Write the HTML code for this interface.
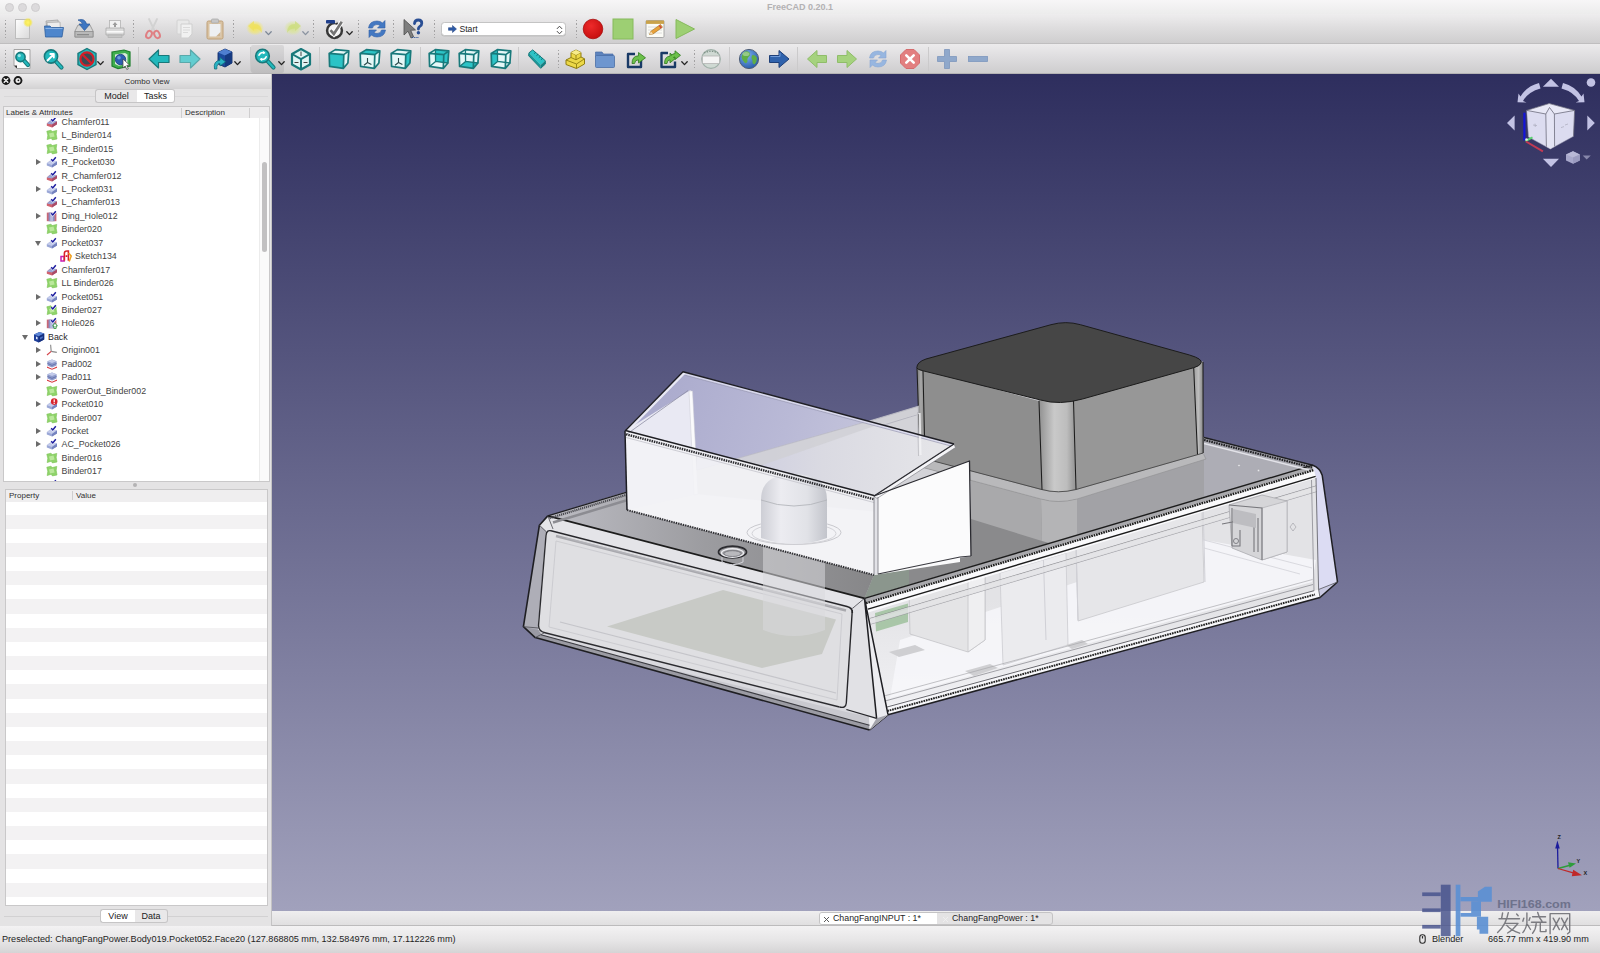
<!DOCTYPE html>
<html>
<head>
<meta charset="utf-8">
<title>FreeCAD 0.20.1</title>
<style>
*{box-sizing:border-box;margin:0;padding:0}
html,body{width:1600px;height:953px;overflow:hidden;background:#ececec;font-family:"Liberation Sans",sans-serif;color:#262626}
.abs{position:absolute}
#titlebar{left:0;top:0;width:1600px;height:14px;background:linear-gradient(#f7f6f7,#ececec);}
#title{left:0;top:1px;width:1600px;text-align:center;font-size:9px;line-height:13px;color:#b3b1b3;font-weight:bold}
.tl{width:9px;height:9px;border-radius:50%;background:#dcdadc;border:1px solid #cfcdcf;top:3px}
#tb1{left:0;top:14px;width:1600px;height:30px;background:linear-gradient(#eeedee,#dfdedf 45%,#cfcecf);border-bottom:1px solid #bfbebf}
#tb2{left:0;top:44px;width:1600px;height:30px;background:linear-gradient(#ecebec,#dedddf 45%,#cecdce);border-bottom:1px solid #b4b3b4}
.sep{width:1px;height:24px;background:#cbcacb;top:3px}
.grip{width:1.3px;height:18px;top:6px;background:repeating-linear-gradient(to bottom,#a3a2a3 0 1.3px,transparent 1.3px 3.4px)}
.dd{top:15px;width:5px;height:3px}
#dock{left:0;top:74px;width:272px;height:852px;background:#e4e3e4}
#dockhead{left:0;top:0;width:272px;height:15px;background:linear-gradient(#f0eff0,#e2e1e2 50%,#d3d2d3);font-size:8px;text-align:center;line-height:15px;color:#303030;padding-left:22px}
.seg{font-size:9px;color:#222;text-align:center;line-height:13px;height:14px;border:1px solid #c6c5c6;background:#e9e8e9}
.seg.on{background:#fff}
#treebox{left:3px;top:32px;width:267px;height:376px;background:#fff;border:1px solid #c9c8c9;overflow:hidden}
#treehead{left:0;top:0;width:265px;height:11px;background:#eeedee;font-size:7.5px;line-height:11px;color:#303030}
.row{left:0;height:14px;font-size:8.85px;line-height:14px;white-space:nowrap;color:#3a3a3a}
.tri{width:0;height:0;border-style:solid}
.tri.r{border-width:3px 0 3px 5px;border-color:transparent transparent transparent #6b6b6b}
.tri.d{border-width:5px 3px 0 3px;border-color:#6b6b6b transparent transparent transparent}
#propbox{left:5px;top:415px;width:263px;height:417px;background:#fff;border:1px solid #c9c8c9;overflow:hidden}
#view{left:272px;top:74px;width:1328px;height:837px;background:linear-gradient(#2e2e5e,#a1a1bc);overflow:hidden}
#tabbar{left:272px;top:911px;width:1328px;height:15px;background:linear-gradient(#efeeef,#e0dfe0);border-bottom:1px solid #bcbbbc}
.dtab{top:1px;height:13px;font-size:8.8px;line-height:13px;color:#242424;white-space:nowrap}
#status{left:0;top:926px;width:1600px;height:27px;background:linear-gradient(#f3f2f3,#e6e5e6 55%,#d5d4d5);font-size:9.12px;color:#1e1e1e}
</style>
</head>
<body>
<div id="titlebar" class="abs">
  <div class="abs tl" style="left:5px"></div><div class="abs tl" style="left:18px"></div><div class="abs tl" style="left:31px"></div>
  <div id="title" class="abs">FreeCAD 0.20.1</div>
</div>

<div id="tb1" class="abs"><div class="abs grip" style="left:5.0px"></div>
<svg class="abs" style="left:10.6px;top:3.0px" width="24" height="24" viewBox="0 0 24 24" ><defs><linearGradient id="nw" x1="0" y1="0" x2="1" y2="1"><stop offset="0" stop-color="#fff"/><stop offset="1" stop-color="#d9d9d9"/></linearGradient><radialGradient id="nst"><stop offset="0" stop-color="#fff36a"/><stop offset=".55" stop-color="#f6e84a" stop-opacity=".9"/><stop offset="1" stop-color="#f6e84a" stop-opacity="0"/></radialGradient></defs><rect x="4.5" y="2.5" width="14" height="19" fill="url(#nw)" stroke="#bdbdbd"/><circle cx="17" cy="5.5" r="5" fill="url(#nst)"/></svg>
<svg class="abs" style="left:42.0px;top:3.0px" width="24" height="24" viewBox="0 0 24 24" ><path d="M4 4 L16 3 L17 14 L5 15 Z" fill="#d4d4d4" stroke="#9a9a9a" stroke-width=".7"/><path d="M5 5.5 L18 5 L18.5 15 L6 16 Z" fill="#ececec" stroke="#a5a5a5" stroke-width=".7"/><path d="M2.5 9 L8 9 L9.5 10.5 L21.5 10.5 L20 20 L3.5 20 Z" fill="#4e86cc" stroke="#2f5f9e" stroke-width=".8"/><path d="M3.5 11.5 L20.5 11.5" stroke="#8bb4e6" stroke-width="1"/></svg>
<svg class="abs" style="left:71.7px;top:3.0px" width="24" height="24" viewBox="0 0 24 24" ><path d="M3 14 L6 8 L18 8 L21 14 L21 20 L3 20 Z" fill="#d5d5d5" stroke="#8e8e8e" stroke-width=".8"/><rect x="3" y="14.5" width="18" height="5.5" fill="#b9b9b9" stroke="#8e8e8e" stroke-width=".8"/><rect x="5" y="17" width="12" height="1.3" fill="#8b8b8b"/><path d="M6 3 Q13 1 14.5 7 L18 7 L12.5 13.5 L7 7 L10.5 7 Q10 4.5 6 3 Z" fill="#3d76c2" stroke="#285798" stroke-width=".7"/></svg>
<svg class="abs" style="left:102.7px;top:3.0px" width="24" height="24" viewBox="0 0 24 24" ><rect x="6.5" y="3.5" width="11" height="8" fill="#f2f2f2" stroke="#b4b4b4" stroke-width=".8"/><path d="M12 5 L14.5 8 L13 8 L13 10 L11 10 L11 8 L9.5 8 Z" fill="#9c9c9c"/><path d="M3 11 L21 11 L21 18 L3 18 Z" fill="#dadada" stroke="#a9a9a9" stroke-width=".8"/><rect x="3.5" y="14" width="17" height="1.6" fill="#fafafa"/><rect x="5" y="18" width="14" height="2.5" fill="#c6c6c6" stroke="#aaa" stroke-width=".6"/></svg>
<div class="abs grip" style="left:132.6px"></div>
<svg class="abs" style="left:140.9px;top:3.0px" width="24" height="24" viewBox="0 0 24 24" ><path d="M8 2 L13.2 13 M16 2 L10.8 13" stroke="#d2d2d2" stroke-width="1.8" fill="none" stroke-linecap="round"/><ellipse cx="8" cy="17.5" rx="2.6" ry="3.8" transform="rotate(25 8 17.5)" fill="none" stroke="#df7f83" stroke-width="2"/><ellipse cx="16" cy="17.5" rx="2.6" ry="3.8" transform="rotate(-25 16 17.5)" fill="none" stroke="#df7f83" stroke-width="2"/></svg>
<svg class="abs" style="left:172.6px;top:3.0px" width="24" height="24" viewBox="0 0 24 24" ><rect x="4" y="3" width="12" height="14" rx="1" fill="#e9e9e9" stroke="#d2d2d2"/><path d="M8 7 L19 7 L19 17 L15.5 21 L8 21 Z" fill="#f1f1f1" stroke="#cfcfcf"/><path d="M10 10.5h7M10 13h7M10 15.5h5" stroke="#dadada" stroke-width="1"/></svg>
<svg class="abs" style="left:202.6px;top:3.0px" width="24" height="24" viewBox="0 0 24 24" ><rect x="4" y="4" width="16" height="18" rx="1.5" fill="#d9c3a3" stroke="#bfa079"/><rect x="6.5" y="7" width="11" height="12.5" fill="#eef0f2"/><rect x="8.5" y="2" width="7" height="4" rx="1" fill="#c6c6c6" stroke="#a8a8a8" stroke-width=".7"/><path d="M13 19.5 L17.5 19.5 L17.5 15 Z" fill="#cdb38f"/></svg>
<div class="abs grip" style="left:232.9px"></div>
<svg class="abs" style="left:243.5px;top:3.0px" width="24" height="24" viewBox="0 0 24 24" ><defs><radialGradient id="un"><stop offset="0" stop-color="#f2e45c"/><stop offset=".6" stop-color="#f0e678" stop-opacity=".75"/><stop offset="1" stop-color="#f0e678" stop-opacity="0"/></radialGradient></defs><ellipse cx="11" cy="11" rx="9" ry="7.5" fill="url(#un)"/><path d="M4 9 L10 4 L10 7 Q18 7 18 16 Q15 11 10 11.5 L10 14 Z" fill="#efe05a" opacity=".75"/></svg>
<svg class="abs" style="left:264.5px;top:17px" width="7" height="5" viewBox="0 0 7 5"><path d="M0.8 0.8 L3.5 3.6 L6.2 0.8" fill="none" stroke="#7c8796" stroke-width="1.3" stroke-linecap="round" stroke-linejoin="round"/></svg>
<svg class="abs" style="left:281.0px;top:3.0px" width="24" height="24" viewBox="0 0 24 24" ><defs><radialGradient id="re"><stop offset="0" stop-color="#d3e08a"/><stop offset=".6" stop-color="#dbe59c" stop-opacity=".7"/><stop offset="1" stop-color="#dbe59c" stop-opacity="0"/></radialGradient></defs><ellipse cx="12" cy="11" rx="9" ry="7.5" fill="url(#re)"/><path d="M20 9 L14 4 L14 7 Q6 7 6 16 Q9 11 14 11.5 L14 14 Z" fill="#cbdc7c" opacity=".75"/></svg>
<svg class="abs" style="left:301.9px;top:17px" width="7" height="5" viewBox="0 0 7 5"><path d="M0.8 0.8 L3.5 3.6 L6.2 0.8" fill="none" stroke="#8a93a0" stroke-width="1.3" stroke-linecap="round" stroke-linejoin="round"/></svg>
<div class="abs grip" style="left:313.0px"></div>
<svg class="abs" style="left:323.0px;top:3.0px" width="24" height="24" viewBox="0 0 24 24" ><circle cx="11.5" cy="13.5" r="7.4" fill="#f4f4f4" stroke="#383838" stroke-width="2.5"/><path d="M7.5 13.2 L10.8 17 L18.8 4.8" fill="none" stroke="#fff" stroke-width="4.6"/><path d="M7.5 13.2 L10.8 17 L18.8 4.8" fill="none" stroke="#757575" stroke-width="2.7"/><rect x="3" y="3" width="9" height="3.6" rx=".8" fill="#1f3f8c"/><path d="M12 3.2 L15.5 4.8 L12 6.4 Z" fill="#d8d8d8"/></svg>
<svg class="abs" style="left:345.5px;top:17px" width="7" height="5" viewBox="0 0 7 5"><path d="M0.8 0.8 L3.5 3.6 L6.2 0.8" fill="none" stroke="#222" stroke-width="1.3" stroke-linecap="round" stroke-linejoin="round"/></svg>
<div class="abs grip" style="left:357.7px"></div>
<svg class="abs" style="left:365.3px;top:3.0px" width="24" height="24" viewBox="0 0 24 24" ><path d="M3.5 11 Q4.5 4 12 4 Q15.5 4 17.5 6 L20 3.5 L20 11 L12.5 11 L15 8.5 Q13.5 7.5 12 7.5 Q8 7.5 7.5 11 Z" fill="#4378c2" stroke="#305fa6" stroke-width=".6"/><path d="M20.5 13 Q19.5 20 12 20 Q8.5 20 6.5 18 L4 20.5 L4 13 L11.5 13 L9 15.5 Q10.5 16.5 12 16.5 Q16 16.5 16.5 13 Z" fill="#4378c2" stroke="#305fa6" stroke-width=".6"/></svg>
<div class="abs grip" style="left:393.0px"></div>
<svg class="abs" style="left:401.4px;top:3.0px" width="24" height="24" viewBox="0 0 24 24" ><path d="M3 2.5 L3 18 L7 14.2 L10 21 L12.6 19.8 L9.7 13.3 L14.5 13 Z" fill="#7e7e7e" stroke="#4e4e4e" stroke-width=".8"/><path d="M13.5 6.5 Q13.8 3 17.3 3 Q20.8 3 20.8 6.2 Q20.8 8.3 18.6 9.6 Q17.4 10.4 17.4 12" fill="none" stroke="#2a4f94" stroke-width="2.8" stroke-linecap="round"/><circle cx="17.4" cy="15.8" r="1.7" fill="#2a4f94"/><path d="M11 20.5 L18 20.5" stroke="#2a4f94" stroke-width="1" stroke-dasharray="1.2 1"/></svg>
<div class="abs grip" style="left:433.7px"></div>
<div class="abs" style="left:441px;top:8px;width:125px;height:14px;background:#fff;border:1px solid #c4c4c4;border-radius:3.5px;box-shadow:0 .5px 0 #bdbdbd"></div>
<svg class="abs" style="left:448px;top:11px" width="9" height="8" viewBox="0 0 9 8"><path d="M0.5 2.7 L4.5 2.7 L4.5 0.5 L8.5 4 L4.5 7.5 L4.5 5.3 L0.5 5.3 Z" fill="#2d5aa6" stroke="#1d3f7c" stroke-width=".5"/></svg>
<div class="abs" style="left:459.5px;top:9px;font-size:8.6px;line-height:12px;color:#222">Start</div>
<svg class="abs" style="left:556px;top:10.5px" width="7" height="10" viewBox="0 0 7 10"><path d="M1.2 3.6 L3.5 1.2 L5.8 3.6 M1.2 6.4 L3.5 8.8 L5.8 6.4" fill="none" stroke="#444" stroke-width="1" stroke-linecap="round" stroke-linejoin="round"/></svg>
<div class="abs grip" style="left:575.7px"></div>
<svg class="abs" style="left:580.6px;top:3.0px" width="24" height="24" viewBox="0 0 24 24" ><defs><radialGradient id="rc" cx=".4" cy=".35" r=".7"><stop offset="0" stop-color="#ee2a2a"/><stop offset="1" stop-color="#c40e0e"/></radialGradient></defs><circle cx="12" cy="12" r="9.8" fill="url(#rc)" stroke="#a80c0c" stroke-width=".8"/></svg>
<svg class="abs" style="left:611.0px;top:3.0px" width="24" height="24" viewBox="0 0 24 24" ><rect x="2" y="2" width="20" height="20" fill="#9dcf73" stroke="#86ba5c" stroke-width="1"/></svg>
<svg class="abs" style="left:643.0px;top:3.0px" width="24" height="24" viewBox="0 0 24 24" ><rect x="3" y="3.5" width="18" height="17" rx="1.2" fill="#fbfbf6" stroke="#9f9f9f" stroke-width=".9"/><rect x="3" y="3.5" width="18" height="3.4" fill="#c9a24a"/><path d="M5 10h14M5 13h14M5 16h14" stroke="#d6d6d6" stroke-width=".8"/><path d="M6.5 17.5 L8 14.2 L17.5 7.5 L19.5 10.2 L10 17 Z" fill="#e9a13a" stroke="#9a6a1c" stroke-width=".6"/><path d="M6.5 17.5 L8 14.2 L10 17 Z" fill="#f3d9b0"/><path d="M16.3 8.4 L18.3 11.1" stroke="#c44" stroke-width="1.5"/></svg>
<svg class="abs" style="left:672.7px;top:3.0px" width="24" height="24" viewBox="0 0 24 24" ><path d="M3 2.5 L21.5 12 L3 21.5 Z" fill="#9dcf73" stroke="#86ba5c" stroke-width="1" stroke-linejoin="round"/></svg></div>
<div id="tb2" class="abs"><div class="abs grip" style="left:5.0px"></div>
<svg class="abs" style="left:9.9px;top:3.0px" width="24" height="24" viewBox="0 0 24 24" ><path d="M4 2.5 L20 2.5 L20 21.5 L7 21.5 L4 18.5 Z" fill="#fafafa" stroke="#9c9c9c" stroke-width=".9"/><path d="M4 18.5 L7 18.5 L7 21.5 Z" fill="#333"/><path d="M13.7 13.2 L18.0 18.0" stroke="#18797b" stroke-width="4.2" stroke-linecap="round"/><path d="M13.7 13.2 L18.0 18.0" stroke="#22b8bc" stroke-width="2.2" stroke-linecap="round"/><circle cx="10.5" cy="10.0" r="4.6" fill="#22b8bc" stroke="#18797b" stroke-width="1.6"/><circle cx="9.3" cy="8.6" r="1.6" fill="#9be6e8"/></svg>
<svg class="abs" style="left:41.3px;top:3.0px" width="24" height="24" viewBox="0 0 24 24" ><path d="M14.6 14.1 L20.5 20.5" stroke="#18797b" stroke-width="4.2" stroke-linecap="round"/><path d="M14.6 14.1 L20.5 20.5" stroke="#22b8bc" stroke-width="2.2" stroke-linecap="round"/><circle cx="10.0" cy="9.5" r="6.6" fill="#22b8bc" stroke="#18797b" stroke-width="1.6"/><path d="M6.5 13.5 L12.5 7.5 M12.8 10.5 L12.8 7 L9.3 7" fill="none" stroke="#fff" stroke-width="1.9" stroke-linecap="round" stroke-linejoin="round"/></svg>
<svg class="abs" style="left:74.7px;top:3.0px" width="24" height="24" viewBox="0 0 24 24" ><path d="M12 1.5 L21 6.5 L21 17.5 L12 22.5 L3 17.5 L3 6.5 Z" fill="#22b8bc" stroke="#18797b" stroke-width="1.4"/><circle cx="12" cy="12" r="6.6" fill="#3b4a55" stroke="#d2202a" stroke-width="2.2"/><path d="M7.3 7.5 L16.7 16.5" stroke="#d2202a" stroke-width="2.4"/></svg>
<svg class="abs" style="left:97.1px;top:17px" width="7" height="5" viewBox="0 0 7 5"><path d="M0.8 0.8 L3.5 3.6 L6.2 0.8" fill="none" stroke="#222" stroke-width="1.3" stroke-linecap="round" stroke-linejoin="round"/></svg>
<svg class="abs" style="left:108.8px;top:3.0px" width="24" height="24" viewBox="0 0 24 24" ><path d="M3 5 L15 3 L21 5 L21 19 L9 21.5 L3 19 Z" fill="#3fae4e" stroke="#1f7f2e" stroke-width="1.2"/><path d="M6 7.5 L16 6 L18.5 7.5 L18.5 17 L9.5 18.8 L6 17 Z" fill="#d8ead9"/><circle cx="11.5" cy="12.5" r="5.2" fill="#2c5fb0" stroke="#1c3f80" stroke-width=".8"/><circle cx="10" cy="10.8" r="1.8" fill="#6f9be0"/><path d="M14 12 L14 21 L16.2 19 L17.8 22.5 L19.3 21.8 L17.8 18.4 L20.6 18.2 Z" fill="#fff" stroke="#444" stroke-width=".7"/></svg>
<div class="abs sep" style="left:138.0px"></div>
<svg class="abs" style="left:146.6px;top:3.0px" width="24" height="24" viewBox="0 0 24 24" ><path d="M2 12 L11.5 3 L11.5 8.5 L22 8.5 L22 15.5 L11.5 15.5 L11.5 21 Z" fill="#22b8bc" stroke="#18797b" stroke-width="1.2" stroke-linejoin="round"/></svg>
<svg class="abs" style="left:177.7px;top:3.0px" width="24" height="24" viewBox="0 0 24 24" ><path d="M22 12 L12.5 3 L12.5 8.5 L2 8.5 L2 15.5 L12.5 15.5 L12.5 21 Z" fill="#63cdd0" stroke="#5aa9ab" stroke-width="1.2" stroke-linejoin="round"/></svg>
<svg class="abs" style="left:210.7px;top:3.0px" width="24" height="24" viewBox="0 0 24 24" ><path d="M7 5.5 L14 2 L21 5 L21 16 L14 20 L7 17 Z" fill="#1d4a9c" stroke="#142f66" stroke-width=".9"/><path d="M7 5.5 L14 2 L21 5 L14 8.5 Z" fill="#4f7fd0"/><path d="M14 8.5 L21 5 L21 16 L14 20 Z" fill="#163a80"/><path d="M3.5 22 Q2 14 9 13.2 L9 10.5 L14.5 14.8 L9 19 L9 16.5 Q5.5 16.5 5.8 22 Z" fill="#2bb3c4" stroke="#12707c" stroke-width=".8"/></svg>
<svg class="abs" style="left:233.5px;top:17px" width="7" height="5" viewBox="0 0 7 5"><path d="M0.8 0.8 L3.5 3.6 L6.2 0.8" fill="none" stroke="#222" stroke-width="1.3" stroke-linecap="round" stroke-linejoin="round"/></svg>
<div class="abs sep" style="left:250.0px"></div>
<div class="abs" style="left:251px;top:1px;width:33px;height:28px;background:rgba(0,0,0,.075);border-radius:2px"></div>
<svg class="abs" style="left:253.0px;top:3.0px" width="24" height="24" viewBox="0 0 24 24" ><path d="M14.3 13.8 L20.5 20.5" stroke="#18797b" stroke-width="4.2" stroke-linecap="round"/><path d="M14.3 13.8 L20.5 20.5" stroke="#22b8bc" stroke-width="2.2" stroke-linecap="round"/><circle cx="9.5" cy="9.0" r="6.8" fill="#22b8bc" stroke="#18797b" stroke-width="1.6"/><path d="M6 8.2 Q7.5 5 11 5.6 M13.2 9.8 Q11.8 13 8.2 12.4" fill="none" stroke="#fff" stroke-width="1.6" stroke-linecap="round"/><path d="M10.2 3.9 L12.6 6 L9.8 7.3 Z M9 14 L6.6 12 L9.4 10.7 Z" fill="#fff"/></svg>
<svg class="abs" style="left:277.5px;top:17px" width="7" height="5" viewBox="0 0 7 5"><path d="M0.8 0.8 L3.5 3.6 L6.2 0.8" fill="none" stroke="#222" stroke-width="1.3" stroke-linecap="round" stroke-linejoin="round"/></svg>
<svg class="abs" style="left:289.4px;top:3.0px" width="24" height="24" viewBox="0 0 24 24" ><path d="M12 2 L21 7 L21 17.5 L12 22.5 L3 17.5 L3 7 Z" fill="#dff4f4" stroke="#18797b" stroke-width="2.2" stroke-linejoin="round"/><path d="M3 7 L12 12 L21 7 M12 12 L12 22.5" fill="none" stroke="#18797b" stroke-width="2"/><path d="M12 4.5 L12 9 M5.5 15.5 L9.5 15.5 M14.5 15.5 L18.5 15.5" stroke="#444" stroke-width="1"/></svg>
<div class="abs sep" style="left:319.0px"></div>
<svg class="abs" style="left:326.5px;top:3.0px" width="24" height="24" viewBox="0 0 24 24" ><polygon points="2.2,6.4 8.4,2.6 21.8,3.9 20.9,16.0 16.3,21.4 2.6,19.4" fill="#e4f7f7"/><polygon points="2.2,6.4 16.8,7.6 16.3,21.4 2.6,19.4" fill="#2cc3c6"/><path d="M2.2 6.4 L16.8 7.6 M16.8 7.6 L16.3 21.4 M16.3 21.4 L2.6 19.4 M2.6 19.4 L2.2 6.4 M2.2 6.4 L8.4 2.6 M8.4 2.6 L21.8 3.9 M21.8 3.9 L20.9 16.0 M20.9 16.0 L16.3 21.4 M16.8 7.6 L21.8 3.9 " fill="none" stroke="#18797b" stroke-width="1.7" stroke-linecap="round" stroke-linejoin="round"/></svg>
<svg class="abs" style="left:357.6px;top:3.0px" width="24" height="24" viewBox="0 0 24 24" ><polygon points="2.2,6.4 8.4,2.6 21.8,3.9 20.9,16.0 16.3,21.4 2.6,19.4" fill="#e4f7f7"/><path d="M9.5 11 L9.5 15.5 M9.5 15.5 L6 18.3 M9.5 15.5 L13.4 17.6" stroke="#2a4a4a" stroke-width="1.1"/><polygon points="2.2,6.4 8.4,2.6 21.8,3.9 16.8,7.6" fill="#2cc3c6"/><path d="M2.2 6.4 L16.8 7.6 M16.8 7.6 L16.3 21.4 M16.3 21.4 L2.6 19.4 M2.6 19.4 L2.2 6.4 M2.2 6.4 L8.4 2.6 M8.4 2.6 L21.8 3.9 M21.8 3.9 L20.9 16.0 M20.9 16.0 L16.3 21.4 M16.8 7.6 L21.8 3.9 " fill="none" stroke="#18797b" stroke-width="1.7" stroke-linecap="round" stroke-linejoin="round"/></svg>
<svg class="abs" style="left:388.6px;top:3.0px" width="24" height="24" viewBox="0 0 24 24" ><polygon points="2.2,6.4 8.4,2.6 21.8,3.9 20.9,16.0 16.3,21.4 2.6,19.4" fill="#e4f7f7"/><path d="M9.5 11 L9.5 15.5 M9.5 15.5 L6 18.3 M9.5 15.5 L13.4 17.6" stroke="#2a4a4a" stroke-width="1.1"/><polygon points="16.8,7.6 21.8,3.9 20.9,16.0 16.3,21.4" fill="#2cc3c6"/><path d="M2.2 6.4 L16.8 7.6 M16.8 7.6 L16.3 21.4 M16.3 21.4 L2.6 19.4 M2.6 19.4 L2.2 6.4 M2.2 6.4 L8.4 2.6 M8.4 2.6 L21.8 3.9 M21.8 3.9 L20.9 16.0 M20.9 16.0 L16.3 21.4 M16.8 7.6 L21.8 3.9 " fill="none" stroke="#18797b" stroke-width="1.7" stroke-linecap="round" stroke-linejoin="round"/></svg>
<div class="abs sep" style="left:419.5px"></div>
<svg class="abs" style="left:426.7px;top:3.0px" width="24" height="24" viewBox="0 0 24 24" ><polygon points="2.2,6.4 8.4,2.6 21.8,3.9 20.9,16.0 16.3,21.4 2.6,19.4" fill="#e4f7f7"/><polygon points="8.4,2.6 21.8,3.9 20.9,16.0 8.6,14.4" fill="#2cc3c6"/><path d="M8.4 2.6 L8.6 14.4 M8.6 14.4 L20.9 16.0 M8.6 14.4 L2.6 19.4 " fill="none" stroke="#18797b" stroke-width="1.3" stroke-linecap="round"/><path d="M2.2 6.4 L16.8 7.6 M16.8 7.6 L16.3 21.4 M16.3 21.4 L2.6 19.4 M2.6 19.4 L2.2 6.4 M2.2 6.4 L8.4 2.6 M8.4 2.6 L21.8 3.9 M21.8 3.9 L20.9 16.0 M20.9 16.0 L16.3 21.4 M16.8 7.6 L21.8 3.9 " fill="none" stroke="#18797b" stroke-width="1.7" stroke-linecap="round" stroke-linejoin="round"/></svg>
<svg class="abs" style="left:457.0px;top:3.0px" width="24" height="24" viewBox="0 0 24 24" ><polygon points="2.2,6.4 8.4,2.6 21.8,3.9 20.9,16.0 16.3,21.4 2.6,19.4" fill="#e4f7f7"/><polygon points="2.6,19.4 8.6,14.4 20.9,16.0 16.3,21.4" fill="#2cc3c6"/><path d="M8.4 2.6 L8.6 14.4 M8.6 14.4 L20.9 16.0 M8.6 14.4 L2.6 19.4 " fill="none" stroke="#18797b" stroke-width="1.3" stroke-linecap="round"/><path d="M2.2 6.4 L16.8 7.6 M16.8 7.6 L16.3 21.4 M16.3 21.4 L2.6 19.4 M2.6 19.4 L2.2 6.4 M2.2 6.4 L8.4 2.6 M8.4 2.6 L21.8 3.9 M21.8 3.9 L20.9 16.0 M20.9 16.0 L16.3 21.4 M16.8 7.6 L21.8 3.9 " fill="none" stroke="#18797b" stroke-width="1.7" stroke-linecap="round" stroke-linejoin="round"/></svg>
<svg class="abs" style="left:488.5px;top:3.0px" width="24" height="24" viewBox="0 0 24 24" ><polygon points="2.2,6.4 8.4,2.6 21.8,3.9 20.9,16.0 16.3,21.4 2.6,19.4" fill="#e4f7f7"/><polygon points="2.2,6.4 8.4,2.6 8.6,14.4 2.6,19.4" fill="#2cc3c6"/><path d="M8.4 2.6 L8.6 14.4 M8.6 14.4 L20.9 16.0 M8.6 14.4 L2.6 19.4 " fill="none" stroke="#18797b" stroke-width="1.3" stroke-linecap="round"/><path d="M2.2 6.4 L16.8 7.6 M16.8 7.6 L16.3 21.4 M16.3 21.4 L2.6 19.4 M2.6 19.4 L2.2 6.4 M2.2 6.4 L8.4 2.6 M8.4 2.6 L21.8 3.9 M21.8 3.9 L20.9 16.0 M20.9 16.0 L16.3 21.4 M16.8 7.6 L21.8 3.9 " fill="none" stroke="#18797b" stroke-width="1.7" stroke-linecap="round" stroke-linejoin="round"/></svg>
<div class="abs sep" style="left:518.0px"></div>
<svg class="abs" style="left:524.9px;top:3.0px" width="24" height="24" viewBox="0 0 24 24" ><path d="M4 5.8 L7.7 2.9 L20.3 13.75 L15.7 17.9 Z" fill="#2cc3c6"/><path d="M4 5.8 L15.7 17.9 L15.7 21.3 L3.6 8.7 Z" fill="#17999b"/><path d="M15.7 17.9 L20.3 13.75 L20.3 17.1 L15.7 21.3 Z" fill="#128083"/><path d="M4 5.8 L7.7 2.9 L20.3 13.75 L20.3 17.1 L15.7 21.3 L3.6 8.7 Z" fill="none" stroke="#18797b" stroke-width="1" stroke-linejoin="round"/><path d="M9.2 6.6 L10.8 5.3 M11.5 8.6 L13.1 7.3 M13.8 10.6 L15.4 9.3 M16.1 12.6 L17.7 11.3" stroke="#0d6d6f" stroke-width="1"/></svg>
<div class="abs grip" style="left:557.8px"></div>
<svg class="abs" style="left:562.7px;top:3.0px" width="24" height="24" viewBox="0 0 24 24" ><path d="M3 13 L8 10.5 L8 5.5 L13 3 L18 5.5 L18 10 L21.5 11.8 L21.5 17 L13.5 21.5 L3 17.5 Z" fill="#ecd848" stroke="#8f7d10" stroke-width="1" stroke-linejoin="round"/><path d="M8 5.5 L13 8 L18 5.5 M13 8 L13 12.8 M3 13 L13.5 17 L21.5 11.8 M13.5 17 L13.5 21.5 M8 10.5 L13 12.8 L18 10" fill="none" stroke="#8f7d10" stroke-width=".9"/><path d="M8 5.5 L13 3 L18 5.5 L13 8 Z" fill="#f7ec8a"/></svg>
<svg class="abs" style="left:593.4px;top:3.0px" width="24" height="24" viewBox="0 0 24 24" ><path d="M2.5 5 L9 5 L10.5 7 L20 7 L20 10 L2.5 10 Z" fill="#5d83bd" stroke="#4a6ea6" stroke-width=".7"/><rect x="2.5" y="8.5" width="19" height="12" rx="1" fill="#6e96cf" stroke="#4a6ea6" stroke-width=".8"/></svg>
<svg class="abs" style="left:624.4px;top:3.0px" width="24" height="24" viewBox="0 0 24 24" ><path d="M11 7 L4 7 L4 20 L17 20 L17 13" fill="none" stroke="#193a66" stroke-width="2.4" stroke-linejoin="round" transform="translate(0 0)"/><path d="M8 16.5 Q8 9 14.5 8.8 L14.5 5.5 L21.5 10.8 L14.5 16 L14.5 12.8 Q11 12.8 10.5 16.5 Z" fill="#6cc04a" stroke="#2f7a1c" stroke-width=".8" transform="translate(0 0)"/></svg>
<svg class="abs" style="left:658.0px;top:3.0px" width="24" height="24" viewBox="0 0 24 24" ><path d="M10 6 L3.5 6 L3.5 20 L17 20 L17 14.5" fill="none" stroke="#193a66" stroke-width="2.4" stroke-linejoin="round"/><path d="M6.5 16.5 Q6.5 9.5 12 9.2 L12 6.2 L18 11 L12 15.8 L12 12.8 Q9.3 12.8 9 16.5 Z" fill="#6cc04a" stroke="#2f7a1c" stroke-width=".8"/><path d="M13 8.4 Q15 6.6 17 6.6 L17 3.8 L22.5 8.3 L17 12.6 L17 10 Q16 10 15.2 10.6" fill="#6cc04a" stroke="#2f7a1c" stroke-width=".8"/></svg>
<svg class="abs" style="left:680.5px;top:17px" width="7" height="5" viewBox="0 0 7 5"><path d="M0.8 0.8 L3.5 3.6 L6.2 0.8" fill="none" stroke="#222" stroke-width="1.3" stroke-linecap="round" stroke-linejoin="round"/></svg>
<div class="abs grip" style="left:693.8px"></div>
<svg class="abs" style="left:698.7px;top:3.0px" width="24" height="24" viewBox="0 0 24 24" ><circle cx="12" cy="12" r="9.3" fill="#cfd9d3" stroke="#9fb0a8" stroke-width="1.2"/><path d="M5 6 Q12 2.5 19 6" fill="none" stroke="#7d9187" stroke-width="1.2" stroke-dasharray="1.5 1.2"/><rect x="3.5" y="9" width="17" height="7.5" rx="1" fill="#f4f4f4" stroke="#b4b4b4" stroke-width=".8"/></svg>
<div class="abs sep" style="left:729.0px"></div>
<svg class="abs" style="left:736.5px;top:3.0px" width="24" height="24" viewBox="0 0 24 24" ><defs><radialGradient id="gl" cx=".38" cy=".32" r=".75"><stop offset="0" stop-color="#7fb2ee"/><stop offset="1" stop-color="#2458a8"/></radialGradient></defs><circle cx="12" cy="12" r="9.6" fill="url(#gl)" stroke="#4f5f78" stroke-width="1"/><path d="M7 5 Q10 3.5 12.5 5.5 Q14 8 11.5 10 Q9.5 12 10.5 14.5 Q9 17.5 7.5 15.5 Q5 13 4.5 10 Q5 6.5 7 5 Z" fill="#5fae46"/><path d="M15.5 8 Q18.5 7.5 20 11 Q20 15 17.5 17.5 Q15 17 15.5 13.5 Q13.5 10.5 15.5 8 Z" fill="#5fae46"/><ellipse cx="9" cy="7" rx="3.5" ry="2" fill="#fff" opacity=".35"/></svg>
<svg class="abs" style="left:767.0px;top:3.0px" width="24" height="24" viewBox="0 0 24 24" ><path d="M2.5 8.5 L12 8.5 L12 3.5 L22 12 L12 20.5 L12 15.5 L2.5 15.5 Z" fill="#2f62ac" stroke="#1e3f78" stroke-width="1" stroke-linejoin="round"/><path d="M3.5 9.5 L13 9.5 L13 6" fill="none" stroke="#6f9ad8" stroke-width="1"/></svg>
<div class="abs sep" style="left:797.4px"></div>
<svg class="abs" style="left:805.0px;top:3.0px" width="24" height="24" viewBox="0 0 24 24" ><path d="M2.5 12 L12 3.5 L12 8.5 L21.5 8.5 L21.5 15.5 L12 15.5 L12 20.5 Z" fill="#a5d27e" stroke="#8fbd69" stroke-width="1" stroke-linejoin="round"/></svg>
<svg class="abs" style="left:835.4px;top:3.0px" width="24" height="24" viewBox="0 0 24 24" ><path d="M21.5 12 L12 3.5 L12 8.5 L2.5 8.5 L2.5 15.5 L12 15.5 L12 20.5 Z" fill="#a5d27e" stroke="#8fbd69" stroke-width="1" stroke-linejoin="round"/></svg>
<svg class="abs" style="left:866.4px;top:3.0px" width="24" height="24" viewBox="0 0 24 24" ><path d="M3.5 11 Q4.5 4 12 4 Q15.5 4 17.5 6 L20 3.5 L20 11 L12.5 11 L15 8.5 Q13.5 7.5 12 7.5 Q8 7.5 7.5 11 Z" fill="#97b6e0" stroke="#86a6d3" stroke-width=".6"/><path d="M20.5 13 Q19.5 20 12 20 Q8.5 20 6.5 18 L4 20.5 L4 13 L11.5 13 L9 15.5 Q10.5 16.5 12 16.5 Q16 16.5 16.5 13 Z" fill="#97b6e0" stroke="#86a6d3" stroke-width=".6"/></svg>
<svg class="abs" style="left:897.8px;top:3.0px" width="24" height="24" viewBox="0 0 24 24" ><path d="M8 2.5 L16 2.5 L21.5 8 L21.5 16 L16 21.5 L8 21.5 L2.5 16 L2.5 8 Z" fill="#e27f80" stroke="#d56c6e" stroke-width="1"/><path d="M8.3 8.3 L15.7 15.7 M15.7 8.3 L8.3 15.7" stroke="#fff" stroke-width="2.6" stroke-linecap="round"/></svg>
<div class="abs sep" style="left:928.4px"></div>
<svg class="abs" style="left:935.0px;top:3.0px" width="24" height="24" viewBox="0 0 24 24" ><path d="M9.5 2.5 L14.5 2.5 L14.5 9.5 L21.5 9.5 L21.5 14.5 L14.5 14.5 L14.5 21.5 L9.5 21.5 L9.5 14.5 L2.5 14.5 L2.5 9.5 L9.5 9.5 Z" fill="#8fa8cb" stroke="#7d97bd" stroke-width=".8"/></svg>
<svg class="abs" style="left:966.3px;top:3.0px" width="24" height="24" viewBox="0 0 24 24" ><rect x="2.5" y="9.5" width="19" height="5" fill="#8fa8cb" stroke="#7d97bd" stroke-width=".8"/></svg></div>

<div id="dock" class="abs">
  <div id="dockhead" class="abs">Combo View</div>
  <svg class="abs" style="left:1px;top:1px" width="22" height="11" viewBox="0 0 22 11"><circle cx="5" cy="5.5" r="4.4" fill="#1a1a1a"/><path d="M3.2 3.7 L6.8 7.3 M6.8 3.7 L3.2 7.3" stroke="#f2f2f2" stroke-width="1.4" stroke-linecap="round"/><circle cx="17" cy="5.5" r="4.4" fill="#1a1a1a"/><circle cx="17" cy="5.5" r="2.5" fill="#ededed"/><circle cx="17.4" cy="5.3" r=".9" fill="#1a1a1a"/></svg>

  <div class="abs" style="left:4px;top:22px;width:264px;height:1px;background:#d9d8d9"></div>
  <div class="abs seg" style="left:95px;top:15px;width:42px;border-radius:3px 0 0 3px;border-right:0">Model</div>
  <div class="abs seg on" style="left:137px;top:15px;width:38px;border-radius:0 3px 3px 0;border-left:0">Tasks</div>
  <div id="treebox" class="abs"><div class="abs row" style="top:7.80px;width:258px"><svg class="abs" width="12" height="12" viewBox="0 0 12 12" style="left:42px;top:1px"><path d="M0.8 7.6 L5.4 3.6 L11 5.4 L11 8.2 L6 11.4 L0.8 9.8 Z" fill="#d0616e"/><path d="M0.8 7.6 L5.4 3.6 L11 5.4 L6.2 8.6 Z" fill="#9aa7d6"/><path d="M6.2 8.6 L11 5.4 L11 8.2 L6 11.4 Z" fill="#a84b68"/><path d="M5.2 3.2l1.6 1.7 3-3.6" fill="none" stroke="#fff" stroke-width="2.6"/><path d="M5.2 3.2l1.6 1.7 3-3.6" fill="none" stroke="#1a1a9e" stroke-width="1.5"/></svg><span class="abs" style="left:57.5px;color:#444">Chamfer011</span></div>
<div class="abs row" style="top:21.24px;width:258px"><svg class="abs" width="12" height="12" viewBox="0 0 12 12" style="left:42px;top:1px"><path d="M0.8 2.2 L5 1.2 L6.2 2.6 L10.8 1.4 L10.2 5.2 L11 10 L6.4 10.9 L5.2 9.2 L1.2 10.6 L1.8 6.2 Z" fill="#8fd36a" stroke="#7cc456" stroke-width=".6"/><path d="M3 4.4 L7.5 3.4 L8.6 7.6 L4 8.6 Z" fill="#c9efae" opacity=".75"/></svg><span class="abs" style="left:57.5px;color:#444">L_Binder014</span></div>
<div class="abs row" style="top:34.69px;width:258px"><svg class="abs" width="12" height="12" viewBox="0 0 12 12" style="left:42px;top:1px"><path d="M0.8 2.2 L5 1.2 L6.2 2.6 L10.8 1.4 L10.2 5.2 L11 10 L6.4 10.9 L5.2 9.2 L1.2 10.6 L1.8 6.2 Z" fill="#8fd36a" stroke="#7cc456" stroke-width=".6"/><path d="M3 4.4 L7.5 3.4 L8.6 7.6 L4 8.6 Z" fill="#c9efae" opacity=".75"/></svg><span class="abs" style="left:57.5px;color:#444">R_Binder015</span></div>
<div class="abs row" style="top:48.14px;width:258px"><div class="abs tri r" style="left:32.0px;top:4px"></div><svg class="abs" width="12" height="12" viewBox="0 0 12 12" style="left:42px;top:1px"><path d="M0.8 7.2 L5.6 3.6 L11 5.6 L11 8.4 L6 11.4 L0.8 9.6 Z" fill="#9aa7d6"/><path d="M0.8 7.2 L5.6 3.6 L11 5.6 L6 9 Z" fill="#c3cbea"/><path d="M6 9 L11 5.6 L11 8.4 L6 11.4 Z" fill="#7583bf"/><path d="M5.2 3.2l1.6 1.7 3-3.6" fill="none" stroke="#fff" stroke-width="2.6"/><path d="M5.2 3.2l1.6 1.7 3-3.6" fill="none" stroke="#1a1a9e" stroke-width="1.5"/></svg><span class="abs" style="left:57.5px;color:#444">R_Pocket030</span></div>
<div class="abs row" style="top:61.58px;width:258px"><svg class="abs" width="12" height="12" viewBox="0 0 12 12" style="left:42px;top:1px"><path d="M0.8 7.6 L5.4 3.6 L11 5.4 L11 8.2 L6 11.4 L0.8 9.8 Z" fill="#d0616e"/><path d="M0.8 7.6 L5.4 3.6 L11 5.4 L6.2 8.6 Z" fill="#9aa7d6"/><path d="M6.2 8.6 L11 5.4 L11 8.2 L6 11.4 Z" fill="#a84b68"/><path d="M5.2 3.2l1.6 1.7 3-3.6" fill="none" stroke="#fff" stroke-width="2.6"/><path d="M5.2 3.2l1.6 1.7 3-3.6" fill="none" stroke="#1a1a9e" stroke-width="1.5"/></svg><span class="abs" style="left:57.5px;color:#444">R_Chamfer012</span></div>
<div class="abs row" style="top:75.02px;width:258px"><div class="abs tri r" style="left:32.0px;top:4px"></div><svg class="abs" width="12" height="12" viewBox="0 0 12 12" style="left:42px;top:1px"><path d="M0.8 7.2 L5.6 3.6 L11 5.6 L11 8.4 L6 11.4 L0.8 9.6 Z" fill="#9aa7d6"/><path d="M0.8 7.2 L5.6 3.6 L11 5.6 L6 9 Z" fill="#c3cbea"/><path d="M6 9 L11 5.6 L11 8.4 L6 11.4 Z" fill="#7583bf"/><path d="M5.2 3.2l1.6 1.7 3-3.6" fill="none" stroke="#fff" stroke-width="2.6"/><path d="M5.2 3.2l1.6 1.7 3-3.6" fill="none" stroke="#1a1a9e" stroke-width="1.5"/></svg><span class="abs" style="left:57.5px;color:#444">L_Pocket031</span></div>
<div class="abs row" style="top:88.47px;width:258px"><svg class="abs" width="12" height="12" viewBox="0 0 12 12" style="left:42px;top:1px"><path d="M0.8 7.6 L5.4 3.6 L11 5.4 L11 8.2 L6 11.4 L0.8 9.8 Z" fill="#d0616e"/><path d="M0.8 7.6 L5.4 3.6 L11 5.4 L6.2 8.6 Z" fill="#9aa7d6"/><path d="M6.2 8.6 L11 5.4 L11 8.2 L6 11.4 Z" fill="#a84b68"/><path d="M5.2 3.2l1.6 1.7 3-3.6" fill="none" stroke="#fff" stroke-width="2.6"/><path d="M5.2 3.2l1.6 1.7 3-3.6" fill="none" stroke="#1a1a9e" stroke-width="1.5"/></svg><span class="abs" style="left:57.5px;color:#444">L_Chamfer013</span></div>
<div class="abs row" style="top:101.92px;width:258px"><div class="abs tri r" style="left:32.0px;top:4px"></div><svg class="abs" width="12" height="12" viewBox="0 0 12 12" style="left:42px;top:1px"><rect x="0.8" y="2.6" width="9.6" height="8.6" fill="#c96877"/><rect x="2.6" y="2.6" width="6" height="8.6" fill="#8d8fc4"/><rect x="4.2" y="2.6" width="2.8" height="8.6" fill="#b7b9de"/><path d="M5.2 3.2l1.6 1.7 3-3.6" fill="none" stroke="#fff" stroke-width="2.6"/><path d="M5.2 3.2l1.6 1.7 3-3.6" fill="none" stroke="#1a1a9e" stroke-width="1.5"/></svg><span class="abs" style="left:57.5px;color:#444">Ding_Hole012</span></div>
<div class="abs row" style="top:115.36px;width:258px"><svg class="abs" width="12" height="12" viewBox="0 0 12 12" style="left:42px;top:1px"><path d="M0.8 2.2 L5 1.2 L6.2 2.6 L10.8 1.4 L10.2 5.2 L11 10 L6.4 10.9 L5.2 9.2 L1.2 10.6 L1.8 6.2 Z" fill="#8fd36a" stroke="#7cc456" stroke-width=".6"/><path d="M3 4.4 L7.5 3.4 L8.6 7.6 L4 8.6 Z" fill="#c9efae" opacity=".75"/></svg><span class="abs" style="left:57.5px;color:#444">Binder020</span></div>
<div class="abs row" style="top:128.81px;width:258px"><div class="abs tri d" style="left:31.0px;top:5px"></div><svg class="abs" width="12" height="12" viewBox="0 0 12 12" style="left:42px;top:1px"><path d="M0.8 7.2 L5.6 3.6 L11 5.6 L11 8.4 L6 11.4 L0.8 9.6 Z" fill="#9aa7d6"/><path d="M0.8 7.2 L5.6 3.6 L11 5.6 L6 9 Z" fill="#c3cbea"/><path d="M6 9 L11 5.6 L11 8.4 L6 11.4 Z" fill="#7583bf"/><path d="M5.2 3.2l1.6 1.7 3-3.6" fill="none" stroke="#fff" stroke-width="2.6"/><path d="M5.2 3.2l1.6 1.7 3-3.6" fill="none" stroke="#1a1a9e" stroke-width="1.5"/></svg><span class="abs" style="left:57.5px;color:#444">Pocket037</span></div>
<div class="abs row" style="top:142.25px;width:258px"><svg class="abs" width="12" height="12" viewBox="0 0 12 12" style="left:56px;top:1px"><path d="M1 11 L1 6.4 L4.2 6.4 L4.2 11 Z" fill="none" stroke="#c81fb4" stroke-width="1.5"/><path d="M4.4 10.8 L4.4 3.2 Q4.4 1 7 1 L8.4 1 L8.4 10.8" fill="#fff" stroke="#d8202a" stroke-width="1.6"/><path d="M8.6 3 L11.2 6 L9.2 11.4" fill="none" stroke="#f0a020" stroke-width="1.5"/><rect x="5.6" y="5.2" width="1.8" height="1.8" fill="#d8202a"/></svg><span class="abs" style="left:71.0px;color:#444">Sketch134</span></div>
<div class="abs row" style="top:155.69px;width:258px"><svg class="abs" width="12" height="12" viewBox="0 0 12 12" style="left:42px;top:1px"><path d="M0.8 7.6 L5.4 3.6 L11 5.4 L11 8.2 L6 11.4 L0.8 9.8 Z" fill="#d0616e"/><path d="M0.8 7.6 L5.4 3.6 L11 5.4 L6.2 8.6 Z" fill="#9aa7d6"/><path d="M6.2 8.6 L11 5.4 L11 8.2 L6 11.4 Z" fill="#a84b68"/><path d="M5.2 3.2l1.6 1.7 3-3.6" fill="none" stroke="#fff" stroke-width="2.6"/><path d="M5.2 3.2l1.6 1.7 3-3.6" fill="none" stroke="#1a1a9e" stroke-width="1.5"/></svg><span class="abs" style="left:57.5px;color:#444">Chamfer017</span></div>
<div class="abs row" style="top:169.14px;width:258px"><svg class="abs" width="12" height="12" viewBox="0 0 12 12" style="left:42px;top:1px"><path d="M0.8 2.2 L5 1.2 L6.2 2.6 L10.8 1.4 L10.2 5.2 L11 10 L6.4 10.9 L5.2 9.2 L1.2 10.6 L1.8 6.2 Z" fill="#8fd36a" stroke="#7cc456" stroke-width=".6"/><path d="M3 4.4 L7.5 3.4 L8.6 7.6 L4 8.6 Z" fill="#c9efae" opacity=".75"/></svg><span class="abs" style="left:57.5px;color:#444">LL Binder026</span></div>
<div class="abs row" style="top:182.58px;width:258px"><div class="abs tri r" style="left:32.0px;top:4px"></div><svg class="abs" width="12" height="12" viewBox="0 0 12 12" style="left:42px;top:1px"><path d="M0.8 7.2 L5.6 3.6 L11 5.6 L11 8.4 L6 11.4 L0.8 9.6 Z" fill="#9aa7d6"/><path d="M0.8 7.2 L5.6 3.6 L11 5.6 L6 9 Z" fill="#c3cbea"/><path d="M6 9 L11 5.6 L11 8.4 L6 11.4 Z" fill="#7583bf"/><path d="M5.2 3.2l1.6 1.7 3-3.6" fill="none" stroke="#fff" stroke-width="2.6"/><path d="M5.2 3.2l1.6 1.7 3-3.6" fill="none" stroke="#1a1a9e" stroke-width="1.5"/></svg><span class="abs" style="left:57.5px;color:#444">Pocket051</span></div>
<div class="abs row" style="top:196.03px;width:258px"><svg class="abs" width="12" height="12" viewBox="0 0 12 12" style="left:42px;top:1px"><path d="M0.8 2.8 L5 1.8 L6.2 3.2 L10.2 2.4 L10.2 5.2 L11 10 L6.4 10.9 L5.2 9.2 L1.2 10.6 L1.8 6.2 Z" fill="#8fd36a" stroke="#7cc456" stroke-width=".6"/><path d="M3 5 L7.5 4 L8.6 7.8 L4 8.8 Z" fill="#c9efae" opacity=".75"/><path d="M5.2 3.2l1.6 1.7 3-3.6" fill="none" stroke="#fff" stroke-width="2.6"/><path d="M5.2 3.2l1.6 1.7 3-3.6" fill="none" stroke="#1a1a9e" stroke-width="1.5"/></svg><span class="abs" style="left:57.5px;color:#444">Binder027</span></div>
<div class="abs row" style="top:209.48px;width:258px"><div class="abs tri r" style="left:32.0px;top:4px"></div><svg class="abs" width="12" height="12" viewBox="0 0 12 12" style="left:42px;top:1px"><rect x="0.8" y="2.6" width="9.6" height="8.6" fill="#c96877"/><rect x="2.6" y="2.6" width="6" height="8.6" fill="#8d8fc4"/><rect x="4.2" y="2.6" width="2.8" height="8.6" fill="#b7b9de"/><path d="M5.2 3.2l1.6 1.7 3-3.6" fill="none" stroke="#fff" stroke-width="2.6"/><path d="M5.2 3.2l1.6 1.7 3-3.6" fill="none" stroke="#1a1a9e" stroke-width="1.5"/><path d="M9 6.2 L11.4 9 L10 9 L10 11.6 L8 11.6 L8 9 L6.6 9 Z" fill="#fff" stroke="#2e9c3c" stroke-width=".9"/></svg><span class="abs" style="left:57.5px;color:#444">Hole026</span></div>
<div class="abs row" style="top:222.92px;width:258px"><div class="abs tri d" style="left:17.5px;top:5px"></div><svg class="abs" width="12" height="12" viewBox="0 0 12 12" style="left:29px;top:1px"><path d="M1 3.6 L6.4 1 L11.2 2.4 L11.2 8.4 L5.6 11.4 L1 9.6 Z" fill="#1f3f9a"/><path d="M1 3.6 L6.4 1 L11.2 2.4 L5.8 5.2 Z" fill="#5d86d6"/><path d="M5.8 5.2 L11.2 2.4 L11.2 8.4 L5.6 11.4 Z" fill="#16307e"/><path d="M3 5.6 L3 8 L4.6 8.6 L4.6 6.2 Z" fill="#dfe8ff"/><path d="M7 6.6 L9.8 5.2 L9.8 7 L7 8.4 Z" fill="#4a6fc4"/></svg><span class="abs" style="left:44.0px;color:#2a2a2a">Back</span></div>
<div class="abs row" style="top:236.37px;width:258px"><div class="abs tri r" style="left:32.0px;top:4px"></div><svg class="abs" width="12" height="12" viewBox="0 0 12 12" style="left:42px;top:1px"><path d="M4.6 0.8 L5.2 7.4" stroke="#8a8a8a" stroke-width="1.1" fill="none"/><path d="M5.2 7.4 L10.8 8.4" stroke="#8a8a8a" stroke-width="1.1" fill="none"/><path d="M5.2 7.4 L1 11" stroke="#d4444a" stroke-width="1.2" fill="none"/></svg><span class="abs" style="left:57.5px;color:#444">Origin001</span></div>
<div class="abs row" style="top:249.81px;width:258px"><div class="abs tri r" style="left:32.0px;top:4px"></div><svg class="abs" width="12" height="12" viewBox="0 0 12 12" style="left:42px;top:1px"><path d="M1 8.4 L6 10.8 L11 8.4 L11 9.8 L6 11.8 L1 9.8 Z" fill="#d8343c"/><path d="M1.4 3.2 L6 1.4 L10.6 3.2 L10.6 7.6 L6 9.6 L1.4 7.6 Z" fill="#8f9ccc"/><path d="M1.4 3.2 L6 1.4 L10.6 3.2 L6 5 Z" fill="#c3cbea"/><path d="M1.4 5.4 L6 7.4 L10.6 5.4" fill="none" stroke="#5d6aa6" stroke-width=".8"/></svg><span class="abs" style="left:57.5px;color:#444">Pad002</span></div>
<div class="abs row" style="top:263.26px;width:258px"><div class="abs tri r" style="left:32.0px;top:4px"></div><svg class="abs" width="12" height="12" viewBox="0 0 12 12" style="left:42px;top:1px"><path d="M1 8.4 L6 10.8 L11 8.4 L11 9.8 L6 11.8 L1 9.8 Z" fill="#d8343c"/><path d="M1.4 3.2 L6 1.4 L10.6 3.2 L10.6 7.6 L6 9.6 L1.4 7.6 Z" fill="#8f9ccc"/><path d="M1.4 3.2 L6 1.4 L10.6 3.2 L6 5 Z" fill="#c3cbea"/><path d="M1.4 5.4 L6 7.4 L10.6 5.4" fill="none" stroke="#5d6aa6" stroke-width=".8"/></svg><span class="abs" style="left:57.5px;color:#444">Pad011</span></div>
<div class="abs row" style="top:276.70px;width:258px"><svg class="abs" width="12" height="12" viewBox="0 0 12 12" style="left:42px;top:1px"><path d="M0.8 2.2 L5 1.2 L6.2 2.6 L10.8 1.4 L10.2 5.2 L11 10 L6.4 10.9 L5.2 9.2 L1.2 10.6 L1.8 6.2 Z" fill="#8fd36a" stroke="#7cc456" stroke-width=".6"/><path d="M3 4.4 L7.5 3.4 L8.6 7.6 L4 8.6 Z" fill="#c9efae" opacity=".75"/></svg><span class="abs" style="left:57.5px;color:#444">PowerOut_Binder002</span></div>
<div class="abs row" style="top:290.15px;width:258px"><div class="abs tri r" style="left:32.0px;top:4px"></div><svg class="abs" width="12" height="12" viewBox="0 0 12 12" style="left:42px;top:1px"><path d="M0.8 7.2 L5.6 3.6 L11 5.6 L11 8.4 L6 11.4 L0.8 9.6 Z" fill="#9aa7d6"/><path d="M0.8 7.2 L5.6 3.6 L11 5.6 L6 9 Z" fill="#c3cbea"/><path d="M6 9 L11 5.6 L11 8.4 L6 11.4 Z" fill="#7583bf"/><circle cx="8.2" cy="3.6" r="3.3" fill="#d8242c"/><rect x="7.6" y="1.4" width="1.2" height="2.8" fill="#fff"/><rect x="7.6" y="4.8" width="1.2" height="1.1" fill="#fff"/></svg><span class="abs" style="left:57.5px;color:#444">Pocket010</span></div>
<div class="abs row" style="top:303.59px;width:258px"><svg class="abs" width="12" height="12" viewBox="0 0 12 12" style="left:42px;top:1px"><path d="M0.8 2.2 L5 1.2 L6.2 2.6 L10.8 1.4 L10.2 5.2 L11 10 L6.4 10.9 L5.2 9.2 L1.2 10.6 L1.8 6.2 Z" fill="#8fd36a" stroke="#7cc456" stroke-width=".6"/><path d="M3 4.4 L7.5 3.4 L8.6 7.6 L4 8.6 Z" fill="#c9efae" opacity=".75"/></svg><span class="abs" style="left:57.5px;color:#444">Binder007</span></div>
<div class="abs row" style="top:317.04px;width:258px"><div class="abs tri r" style="left:32.0px;top:4px"></div><svg class="abs" width="12" height="12" viewBox="0 0 12 12" style="left:42px;top:1px"><path d="M0.8 7.2 L5.6 3.6 L11 5.6 L11 8.4 L6 11.4 L0.8 9.6 Z" fill="#9aa7d6"/><path d="M0.8 7.2 L5.6 3.6 L11 5.6 L6 9 Z" fill="#c3cbea"/><path d="M6 9 L11 5.6 L11 8.4 L6 11.4 Z" fill="#7583bf"/><path d="M5.2 3.2l1.6 1.7 3-3.6" fill="none" stroke="#fff" stroke-width="2.6"/><path d="M5.2 3.2l1.6 1.7 3-3.6" fill="none" stroke="#1a1a9e" stroke-width="1.5"/></svg><span class="abs" style="left:57.5px;color:#444">Pocket</span></div>
<div class="abs row" style="top:330.48px;width:258px"><div class="abs tri r" style="left:32.0px;top:4px"></div><svg class="abs" width="12" height="12" viewBox="0 0 12 12" style="left:42px;top:1px"><path d="M0.8 7.2 L5.6 3.6 L11 5.6 L11 8.4 L6 11.4 L0.8 9.6 Z" fill="#9aa7d6"/><path d="M0.8 7.2 L5.6 3.6 L11 5.6 L6 9 Z" fill="#c3cbea"/><path d="M6 9 L11 5.6 L11 8.4 L6 11.4 Z" fill="#7583bf"/><path d="M5.2 3.2l1.6 1.7 3-3.6" fill="none" stroke="#fff" stroke-width="2.6"/><path d="M5.2 3.2l1.6 1.7 3-3.6" fill="none" stroke="#1a1a9e" stroke-width="1.5"/></svg><span class="abs" style="left:57.5px;color:#444">AC_Pocket026</span></div>
<div class="abs row" style="top:343.93px;width:258px"><svg class="abs" width="12" height="12" viewBox="0 0 12 12" style="left:42px;top:1px"><path d="M0.8 2.2 L5 1.2 L6.2 2.6 L10.8 1.4 L10.2 5.2 L11 10 L6.4 10.9 L5.2 9.2 L1.2 10.6 L1.8 6.2 Z" fill="#8fd36a" stroke="#7cc456" stroke-width=".6"/><path d="M3 4.4 L7.5 3.4 L8.6 7.6 L4 8.6 Z" fill="#c9efae" opacity=".75"/></svg><span class="abs" style="left:57.5px;color:#444">Binder016</span></div>
<div class="abs row" style="top:357.37px;width:258px"><svg class="abs" width="12" height="12" viewBox="0 0 12 12" style="left:42px;top:1px"><path d="M0.8 2.2 L5 1.2 L6.2 2.6 L10.8 1.4 L10.2 5.2 L11 10 L6.4 10.9 L5.2 9.2 L1.2 10.6 L1.8 6.2 Z" fill="#8fd36a" stroke="#7cc456" stroke-width=".6"/><path d="M3 4.4 L7.5 3.4 L8.6 7.6 L4 8.6 Z" fill="#c9efae" opacity=".75"/></svg><span class="abs" style="left:57.5px;color:#444">Binder017</span></div>
<div class="abs row" style="top:370.81px;width:258px"><div class="abs tri r" style="left:32.0px;top:4px"></div><svg class="abs" width="12" height="12" viewBox="0 0 12 12" style="left:42px;top:1px"><path d="M0.8 7.2 L5.6 3.6 L11 5.6 L11 8.4 L6 11.4 L0.8 9.6 Z" fill="#9aa7d6"/><path d="M0.8 7.2 L5.6 3.6 L11 5.6 L6 9 Z" fill="#c3cbea"/><path d="M6 9 L11 5.6 L11 8.4 L6 11.4 Z" fill="#7583bf"/><path d="M5.2 3.2l1.6 1.7 3-3.6" fill="none" stroke="#fff" stroke-width="2.6"/><path d="M5.2 3.2l1.6 1.7 3-3.6" fill="none" stroke="#1a1a9e" stroke-width="1.5"/></svg><span class="abs" style="left:57.5px;color:#444">Pocket028</span></div>
<div id="treehead" class="abs" style="font-size:8px"><span class="abs" style="left:2px">Labels &amp; Attributes</span><span class="abs" style="left:181px">Description</span><div class="abs" style="left:177px;top:1px;width:1px;height:10px;background:#cfcecf"></div><div class="abs" style="left:245px;top:1px;width:1px;height:10px;background:#cfcecf"></div></div>
<div class="abs" style="left:255px;top:11px;width:10px;height:364px;background:#fafafa;border-left:1px solid #ececec"></div>
<div class="abs" style="left:257.5px;top:55px;width:5px;height:90px;border-radius:3px;background:#c1c0c1"></div></div>
  <div class="abs" style="left:133px;top:409px;width:4px;height:4px;border-radius:50%;background:#b4b3b4"></div>
  <div id="propbox" class="abs"><div class="abs" style="left:0;top:0;width:261px;height:12px;background:#efeeef;font-size:8px;line-height:11px;color:#303030"><span class="abs" style="left:3px">Property</span><span class="abs" style="left:70px">Value</span><div class="abs" style="left:66px;top:1px;width:1px;height:9px;background:#cfcecf"></div></div>
<div class="abs" style="left:0;top:24.50px;width:261px;height:14.17px;background:#f3f2f3"></div>
<div class="abs" style="left:0;top:52.83px;width:261px;height:14.17px;background:#f3f2f3"></div>
<div class="abs" style="left:0;top:81.16px;width:261px;height:14.17px;background:#f3f2f3"></div>
<div class="abs" style="left:0;top:109.49px;width:261px;height:14.17px;background:#f3f2f3"></div>
<div class="abs" style="left:0;top:137.82px;width:261px;height:14.17px;background:#f3f2f3"></div>
<div class="abs" style="left:0;top:166.15px;width:261px;height:14.17px;background:#f3f2f3"></div>
<div class="abs" style="left:0;top:194.48px;width:261px;height:14.17px;background:#f3f2f3"></div>
<div class="abs" style="left:0;top:222.81px;width:261px;height:14.17px;background:#f3f2f3"></div>
<div class="abs" style="left:0;top:251.14px;width:261px;height:14.17px;background:#f3f2f3"></div>
<div class="abs" style="left:0;top:279.47px;width:261px;height:14.17px;background:#f3f2f3"></div>
<div class="abs" style="left:0;top:307.80px;width:261px;height:14.17px;background:#f3f2f3"></div>
<div class="abs" style="left:0;top:336.13px;width:261px;height:14.17px;background:#f3f2f3"></div>
<div class="abs" style="left:0;top:364.46px;width:261px;height:14.17px;background:#f3f2f3"></div>
<div class="abs" style="left:0;top:392.79px;width:261px;height:14.17px;background:#f3f2f3"></div></div>
  <div class="abs" style="left:4px;top:842px;width:264px;height:1px;background:#d2d1d2"></div>
  <div class="abs seg on" style="left:100px;top:835px;width:35px;border-radius:3px 0 0 3px;border-right:0">View</div>
  <div class="abs seg" style="left:135px;top:835px;width:33px;border-radius:0 3px 3px 0;border-left:0">Data</div>
</div>
<div class="abs" style="left:271px;top:74px;width:1px;height:852px;background:#c4c3c4"></div>

<div id="view" class="abs"><svg class="abs" style="left:0;top:0" width="1328" height="837" viewBox="272 74 1328 837">
<defs>
<linearGradient id="gTop" x1="546" y1="0" x2="1000" y2="0" gradientUnits="userSpaceOnUse"><stop offset="0" stop-color="#bdbdc4"/><stop offset=".35" stop-color="#9c9ca0"/><stop offset=".75" stop-color="#858587"/><stop offset="1" stop-color="#7c7c7d"/></linearGradient>
<linearGradient id="gCorner" x1="1038" y1="0" x2="1074" y2="0" gradientUnits="userSpaceOnUse"><stop offset="0" stop-color="#8d8d8d"/><stop offset=".45" stop-color="#c9c9c9"/><stop offset=".8" stop-color="#bdbdbd"/><stop offset="1" stop-color="#9a9a9a"/></linearGradient>
<linearGradient id="gCornerR" x1="1193" y1="0" x2="1204" y2="0" gradientUnits="userSpaceOnUse"><stop offset="0" stop-color="#9a9a9a"/><stop offset=".5" stop-color="#bcbcbc"/><stop offset="1" stop-color="#7d7d7d"/></linearGradient>
<linearGradient id="gCornerL" x1="916" y1="0" x2="924" y2="0" gradientUnits="userSpaceOnUse"><stop offset="0" stop-color="#6c6c6c"/><stop offset=".6" stop-color="#a8a8a8"/><stop offset="1" stop-color="#8e8e8e"/></linearGradient>
<linearGradient id="gLid" x1="640" y1="380" x2="930" y2="480" gradientUnits="userSpaceOnUse"><stop offset="0" stop-color="#a9a9cc"/><stop offset=".5" stop-color="#b9b9d6"/><stop offset="1" stop-color="#cdcde0"/></linearGradient>
<linearGradient id="gCyl" x1="761" y1="0" x2="827" y2="0" gradientUnits="userSpaceOnUse"><stop offset="0" stop-color="#cdced5"/><stop offset=".3" stop-color="#ececf1"/><stop offset=".7" stop-color="#e1e2e7"/><stop offset="1" stop-color="#c2c4cb"/></linearGradient>
<linearGradient id="gSide" x1="0" y1="600" x2="0" y2="730" gradientUnits="userSpaceOnUse"><stop offset="0" stop-color="#e3e3e6"/><stop offset="1" stop-color="#f3f3f6"/></linearGradient>
<linearGradient id="gLidW" x1="735" y1="459" x2="930" y2="470" gradientUnits="userSpaceOnUse"><stop offset="0" stop-color="#cdcde0"/><stop offset=".45" stop-color="#dadae2"/><stop offset="1" stop-color="#e4e4e8"/></linearGradient>
</defs>

<g id="chassis">

<path d="M547.8 515.9 L995 384 L1312.8 465.2 L1322.2 475.2 L1337.5 582 L1320 597.5 L888 714.7 L869.5 730 L535.2 637.6 L523.4 626.7 L539.4 525.2 Z" fill="#d9d9de"/>

<path d="M547.8 515.9 L697 470 L873 420 L995 384 L1312.8 465.2 L864.5 598.3 Z" fill="#d3d3d8"/>

<path d="M1076 499 L1204 459 L1204 438 L1312.8 465.2 L1100 528.5 Z" fill="#adadb5"/>

<path d="M547.8 515.9 L626 492.3 L627 510 L874 575 L864.5 598.3 Z" fill="url(#gTop)"/>

<path d="M874 575 L971 556 L971 467 L921 467 L1041 499 L1077 499 L1100 528.5 L864.5 598.3 Z" fill="#8a8a8c"/>
<path d="M864.5 598.3 L874 575 L909 568 L909 585.1 Z" fill="#8b968d"/>

<path d="M921 467 L1041 499 L1042 541 L971 519 L971 480 Z" fill="#a9a9ab"/>
<path d="M1041 499 Q1058 504 1077 499 L1077 535.3 L1050 543.3 L1042 541 Z" fill="#b4b4b6"/>
<path d="M1077 499 L1204 459 L1204 497.5 L1077 535.3 Z" fill="#a2a2a6"/>

<path d="M547.8 515.9 L539.4 525.2 L523.4 626.7 L535.2 637.6 L553.6 642.6 L553.6 641 Q538 637 538.5 627.5 L546 535 Q546.5 529.5 551 530.8 L864.5 610 L864.5 598.3 Z" fill="#e4e4e8"/>
<path d="M539.4 525.2 L523.4 626.7 L535.2 637.6 L538.5 628 L546 531 Z" fill="#aeaeb7"/>
<path d="M523.4 626.7 L535.2 637.6 L545 640 L538.6 630 Z" fill="#9a9aa4"/>

<path d="M551 530.8 L847 606.5 Q852.8 608 852.3 613 L846.3 702 Q845.8 708.6 839.5 707 L545 632.8 Q538 631 538.6 624.5 L546 535.5 Q546.5 529.6 551 530.8 Z" fill="#dfdfe2" stroke="#f4f4f6" stroke-width="1"/>

<path d="M556 536 L846 610.5" stroke="#a9a9ae" stroke-width="2.4" fill="none"/><path d="M607 626.5 L723 590 L836 619.5 L822 654 L762 668 Z" fill="#c8cac6"/>

<path d="M535.2 637.6 L553.6 641 L846.4 712 L876.6 718.3 L869.5 730 Z" fill="#c9c9cf"/>
<path d="M535.2 637.6 L869.5 730 L869.5 725.2 L541 634.8 Z" fill="#9b9ba3"/>

<path d="M864.5 598.3 L1312.8 465.2 L1322.2 475.2 L1337.5 582 L1320 597.5 L888 714.7 L869.5 730 Z" fill="url(#gSide)"/>

<path d="M1312.8 465.2 Q1320 468 1322.2 475.2 L1337.5 582 L1320 597.5 L1318.6 589.5 L1316 478 Z" fill="#dcdcf3"/>
<path d="M1318.6 589.5 L1337.5 582 L1320 597.5 Z" fill="#c9c9e2"/>
</g>

<g id="interior" stroke-linejoin="round">

<path d="M890 698 L1312 582 L1316 560 L1205 540 L900 640 Z" fill="#f7f7fa" opacity=".85"/>

<path d="M875 613 L908 603.5 L908 622 L876 631.5 Z" fill="#a9c6a8"/>
<path d="M875 618 L908 608.5" stroke="#8fae8e" stroke-width="1" fill="none"/>

<path d="M909 590 L985 570 L985 640 L968 652 L910 634 Z" fill="#e4e4e6" stroke="#c4c4c8" stroke-width=".8"/>
<path d="M968 582 L985 576 L985 640 L968 652 Z" fill="#efeff1" stroke="#c4c4c8" stroke-width=".8"/>
<path d="M1000 573 L1066 553 L1068 645 L1003 665 Z" fill="#ebebee" stroke="#cbcbd0" stroke-width=".8"/>
<path d="M1076 548 L1202 511 L1204 582 L1078 621 Z" fill="#e6e6e9" stroke="#c8c8cc" stroke-width=".8"/>

<path d="M889 652 L915 645 L925 650 L899 657 Z" fill="#cfcfd2"/>
<path d="M965 671 L990 664 L998 668 L974 676 Z" fill="#cfcfd2"/>
<path d="M1066 645 L1082 640 L1088 644 L1072 649 Z" fill="#cfcfd2"/>
<path d="M1043 545 L1046 640 M1076 538 L1078 620 M1203 500 L1205 582" stroke="#d0d0d6" stroke-width="1" fill="none"/>
<path d="M1204 540 L1312 568 M1204 548 L1300 574" stroke="#d2d2d8" stroke-width=".8" fill="none"/>
</g>

<g fill="none">

<path d="M864.5 598.3 L1312.8 465.2 L1316 478 L868 612.5 Z" fill="#fafafc" stroke="none"/>
<path d="M864.5 598.3 L1312.8 465.2 L1313.5 469.2 L865.3 602.6 Z" fill="#a9a9ad" stroke="none"/>
<path d="M866 603.2 L1314 470" stroke="#1c1c1c" stroke-width="2.3" stroke-dasharray="1.7 .8"/>
<path d="M864.5 598.3 L1312.8 465.2" stroke="#1c1c1c" stroke-width="1.4"/>
<path d="M868 609.2 L1315.6 476.4" stroke="#1c1c1c" stroke-width="1.4"/>
<path d="M870 618.5 L1316 486" stroke="#77777c" stroke-width=".8"/>
<path d="M871 624 L1316.5 491.5" stroke="#8e8e94" stroke-width=".8"/>
<path d="M870 618.5 L1316 486 L1316.5 491.5 L871 624 Z" fill="#e3e3e6" stroke="none" opacity=".8"/>

<path d="M888 714.7 L1320 597.5 L1318.6 589.5 L886 706 Z" fill="#f7f7fa" stroke="none"/>
<path d="M887.3 711 L1315 594.5" stroke="#222" stroke-width="2" stroke-dasharray="1.7 .8"/>
<path d="M886.4 707.2 L1314 590.7" stroke="#55555a" stroke-width=".9"/>
<path d="M885 701 L1313 584.5" stroke="#8e8e94" stroke-width=".8"/>
<path d="M884 696 L1312.5 579.5" stroke="#a9a9ae" stroke-width=".7"/>
<path d="M869.5 730 L888 714.7 L1320 597.5 L1337.5 582" stroke="#1e1e22" stroke-width="1.6" stroke-linejoin="round"/>

<path d="M864.5 598.3 L888 714.7 L869.5 730 L876.6 718.3 Z" fill="#ececf0" stroke="none"/>
<path d="M852.3 610 L864.5 598.3 L876.6 718.3 L846.4 709 Z" fill="#e1e1e5" stroke="none"/>
<path d="M876.6 718.3 L888 714.7 L869.5 730 Z" fill="#a2a2aa" stroke="none"/>
<path d="M864.5 598.3 L876.6 718.3 M864.5 598.3 L888 714.7" stroke="#1e1e22" stroke-width="1.5"/>
<path d="M852.3 610 L846.3 703 Q845.8 708.6 839.5 707" stroke="#26262a" stroke-width="1.4"/>
<path d="M852.3 608.5 L864.5 598.3" stroke="#44444a" stroke-width=".8"/>
<path d="M846.4 709.5 L876.6 718.3" stroke="#26262a" stroke-width="1.3"/>

<path d="M547.8 515.9 L864.5 598.3" stroke="#1c1c1c" stroke-width="1.8"/>
<path d="M551 530.8 L847 606.5 Q852.8 608 852.3 613" stroke="#26262a" stroke-width="1.5"/>
<path d="M546 535.5 Q546.5 529.6 551 530.8 M546 535.5 L538.6 624.5 Q538 631 545 632.8 L839.5 707" stroke="#2c2c30" stroke-width="1.4"/>
<path d="M547.8 515.9 L539.4 525.2 L523.4 626.7 L535.2 637.6 L869.5 730" stroke="#1e1e22" stroke-width="1.6" stroke-linejoin="round"/>
<path d="M547.8 515.9 L553 529 M539.4 525.2 L546 531.5 M523.4 626.7 L538.6 628 M535.2 637.6 L544 633" stroke="#4a4a50" stroke-width=".8"/>
<path d="M541 634.8 L869.5 725.2" stroke="#3c3c42" stroke-width="1.1"/>
<path d="M556 541 L842 614 L837 700 L549 627 Z" stroke="#c6c6cb" stroke-width=".8"/>
<path d="M566 538 L838 608 M560 622 L836 693" stroke="#b9b9bf" stroke-width="1.2" opacity=".7"/>

<path d="M547.8 515.9 L626 492.3" stroke="#1e1e22" stroke-width="1.3"/><path d="M549.5 518.2 L626 495" stroke="#4a4a50" stroke-width="2.2" stroke-dasharray="1.2 .8"/><path d="M553 522.5 L626 500.5" stroke="#8c8c92" stroke-width="2.5"/>

<path d="M1204 440 L1312 467.5" stroke="#232326" stroke-width="2.2" stroke-dasharray="1.7 .8"/>
<path d="M1204 437.6 L1312.8 465.2 Q1320 468 1322.2 475.2 L1337.5 582" stroke="#1e1e22" stroke-width="1.5"/>
<path d="M1204 443.5 L1309 470" stroke="#e2e2e8" stroke-width="1.5"/>
<path d="M1316 478 L1318.6 589.5 L1320 597.5 M1318.6 589.5 L1337.5 582" stroke="#55555c" stroke-width=".8"/>
<path d="M1311.5 480 L1314 591" stroke="#8a8a92" stroke-width=".8"/>
<path d="M872 420.5 L918 406.5" stroke="#8e8e9c" stroke-width=".8"/><path d="M874 428 L918 414.5" stroke="#a9a9b4" stroke-width=".7"/>
</g>

<g>
<path d="M1229 505 L1262 495 L1287 501 L1287 552 L1262 560 L1232 548 Z" fill="#d5d5d8" stroke="#a9a9ae" stroke-width=".8"/>
<path d="M1262 508 L1287 501 L1287 552 L1262 560 Z" fill="#e3e3e6" stroke="#b0b0b5" stroke-width=".7"/>
<path d="M1222 524 L1248 519 M1232 508 L1232 546 M1240 530 L1240 546 L1232 546 M1254 516 L1254 552 M1258 518 L1258 552 M1229 505 L1262 508 L1262 560" stroke="#77777c" stroke-width="1.1" fill="none"/>
<path d="M1233 509 L1256 514 L1256 528 L1233 523 Z" fill="#bdbdc1"/>
<circle cx="1236" cy="541" r="2.5" fill="none" stroke="#808086" stroke-width="1"/>
<path d="M1293 523 L1296 527 L1293 531 L1290 527 Z" fill="none" stroke="#a5a5ab" stroke-width=".7"/>
<circle cx="1239" cy="465.5" r="1.2" fill="#e8e8ec" stroke="#9a9aa0" stroke-width=".5"/><circle cx="1258.5" cy="470.5" r="1.2" fill="#e8e8ec" stroke="#9a9aa0" stroke-width=".5"/>
</g>

<g id="xfmr" stroke-linejoin="round">

<path d="M920 457 L1041.5 489.5 Q1058 494 1076 489.5 L1203 453 L1206 459 L1077 499 Q1058 504 1041 499 L921 467 Z" fill="#b9b9bb" stroke="#8e8e90" stroke-width=".6"/>

<path d="M917 368 L1039 401 L1042 490 L920 457.5 Z" fill="#8e8e8e"/>
<path d="M916.8 368 L923 370 L925 459 L920 457.5 Z" fill="url(#gCornerL)"/>

<path d="M1038.5 400 L1073.5 400 L1076 489.5 Q1058 494 1041.8 489.5 Z" fill="url(#gCorner)"/>

<path d="M1073.5 401 L1203 362 L1203.2 453 L1076 489.5 Z" fill="#979797"/>
<path d="M1193.7 366 L1203 361 L1203.2 453 L1197.5 454.6 Z" fill="url(#gCornerR)"/>

<path d="M916.8 367.7 Q917 362 926 359 L1051 324.7 Q1065.8 320.6 1080.4 324.7 L1189.5 355 Q1203 359 1201 363 Q1200 366 1193.7 367.7 L1082.5 399 Q1059.5 405.5 1040.6 400 L923 370.8 Q917 369.5 916.8 367.7 Z" fill="#464646" stroke="#1c1c1c" stroke-width="1"/>
<path d="M1039 401 L1042 490 M1073.5 401 L1076 489.5 M923 371 L925 459 M1193.7 367.7 L1197.5 454.6 M917 368 L920 457.5 M1203 362 L1203.2 453" stroke="#1c1c1c" stroke-width="1.05" fill="none"/>
<path d="M920 457.5 L1041.8 489.5 Q1058 494 1076 489.5 L1203.2 453" stroke="#3a3a3a" stroke-width=".8" fill="none"/>
</g>

<path d="M763 545 L763 630 Q794 642 825 630 L825 545 Z" fill="#d8d9dc" opacity=".55"/>

<g id="glass" stroke-linejoin="round">

<path d="M627 509.5 L696.5 494 L960 520 L874 575 Z" fill="#efeff3" opacity=".9"/>

<path d="M625 430.5 L683 371.8 L868.5 421.2 L735 459.3 Z" fill="url(#gLid)"/>
<path d="M735 459.3 L868.5 421.2 L954 444 L874 496 Z" fill="url(#gLidW)"/>
<path d="M735 459.3 L868.5 421.2 L873 420 L919 406 L919 414 L880 424 L760 466 Z" fill="#cfcfd5" opacity=".8"/>
<path d="M697 470 L868.5 421.2 L919 406" fill="none" stroke="#bdbdc6" stroke-width=".8"/>
<path d="M697 449.5 L735 459.3 L697 470 Z" fill="#c6c6de"/>

<path d="M625 431 L690.6 390 L696.5 494 L627.6 509.5 Z" fill="#ececf4" opacity=".95"/>
<path d="M689 391 L692.5 391 L698 494 L694 495 Z" fill="#fafafc" stroke="#c9c9d2" stroke-width=".5"/>

<path d="M625 431 L874 496 L874 575 L627 510 Z" fill="#f3f3f6" opacity=".9"/>

<ellipse cx="794" cy="532.5" rx="47" ry="12" fill="none" stroke="#c9c9ce" stroke-width="1"/>
<ellipse cx="794" cy="533.5" rx="42" ry="10.5" fill="none" stroke="#d3d3d8" stroke-width="1"/>
<path d="M761 500 Q761 474 794 474 Q827 474 827 500 L827 538 Q794 550 761 538 Z" fill="url(#gCyl)"/>
<path d="M761 500 Q794 512 827 500" fill="none" stroke="#b3b5bb" stroke-width=".9"/>

<path d="M874 496 L969.5 461 L971 556 L960 557 L960 562 L874 575 Z" fill="#fbfbfc"/>
<path d="M874 496 L878 497 L878 574 L874 575 Z" fill="#e2e2e7"/>

<path d="M683 371.8 L954 444 L951 446 L684.5 375 Z" fill="#dcdcee" opacity=".9"/>
<path d="M684.5 375 L951 446" fill="none" stroke="#8c8ca6" stroke-width=".6"/>
<path d="M919.5 413 L920.5 455" fill="none" stroke="#f2f2f5" stroke-width="2.2" opacity=".85"/>
<path d="M917.5 412 L918.5 456" fill="none" stroke="#b4b4ba" stroke-width=".7"/>
<path d="M625 430.5 L683 371.8 L685.5 373.5 L628.2 432 Z" fill="#e9e9f4"/>
<path d="M874 496 L954 444 L955.5 447.5 L877 498.5 Z" fill="#f4f4f7" stroke="#77777e" stroke-width=".6"/>

<path d="M625 431 L683 371.8 L954 444" fill="none" stroke="#1e1e24" stroke-width="1.4"/>
<path d="M954 444 L874 496" fill="none" stroke="#2c2c32" stroke-width="1.2"/>
<path d="M627 434 L688 390.5" fill="none" stroke="#8f8fa4" stroke-width=".8"/>
<path d="M625.5 430.5 L874 495.5" fill="none" stroke="#1e1e22" stroke-width="1.3"/>
<path d="M626 434.3 L874 499.3" fill="none" stroke="#2c2c30" stroke-width="2.4" stroke-dasharray="1.5 .9"/>
<path d="M626 437.5 L874 502.5" fill="none" stroke="#c3c3ca" stroke-width=".8"/>
<path d="M625 431 L627 510" fill="none" stroke="#1e1e24" stroke-width="1.5"/>
<path d="M627 510 L874 575" fill="none" stroke="#303034" stroke-width="2" stroke-dasharray="1.5 .9"/>
<path d="M874 496 L874 575 M878 497 L878 574" fill="none" stroke="#77777e" stroke-width=".8"/>
<path d="M874 496 L969.5 461 L971 556" fill="none" stroke="#2a2a30" stroke-width="1.3"/>
<path d="M878 574 L960 557 L971 556" fill="none" stroke="#3a3a40" stroke-width="1.2"/>
</g>

<g fill="none">
<path d="M722 556 L722 562 Q732.5 567.5 743 562 L743 556" stroke="#d4d4da" stroke-width="1"/>
<ellipse cx="732.5" cy="552" rx="14" ry="5.8" stroke="#2c2c30" stroke-width="1.7"/>
<ellipse cx="732.5" cy="553" rx="11" ry="4.2" stroke="#ececf0" stroke-width="1.4"/>
<ellipse cx="732.5" cy="553.6" rx="8.5" ry="2.9" fill="#b9b9bd" stroke="#6c6c72" stroke-width=".7"/>
</g>


</svg>
<svg class="abs" style="left:0;top:0;pointer-events:none" width="1328" height="837" viewBox="272 74 1328 837">
<g fill="#cfcff0" opacity=".92">
<path d="M1542.9 86.7 L1559 86.7 L1551 78.7 Z"/>
<path d="M1542.9 158.8 L1559 158.8 L1551 167 Z"/>
<path d="M1507 123 L1514.6 115.6 L1514.6 130.6 Z"/>
<path d="M1594.8 123 L1587.3 115.6 L1587.3 130.6 Z"/>
<circle cx="1591" cy="82.5" r="4.3"/>
<path d="M1539 83 L1540.5 88.5 Q1528 92 1523 101 L1526.5 102.5 L1517.5 102.2 L1518.5 93.5 L1520.5 96.5 Q1527 86 1539 83 Z"/>
<path d="M1563 83 L1561.5 88.5 Q1574 92 1579 101 L1575.5 102.5 L1584.5 102.2 L1583.5 93.5 L1581.5 96.5 Q1575 86 1563 83 Z"/>
</g>

<g stroke-linejoin="round">
<path d="M1526.7 110.4 L1549.2 103.5 L1574.6 110.4 L1573.5 136.3 L1550.4 149 L1528.5 137 Z" fill="#dcdcf0"/>
<path d="M1526.7 110.4 L1549.2 103.5 L1574.6 110.4 L1554.4 114 L1549.5 107.5 L1545.8 114 Z" fill="#e8e8f6"/>
<path d="M1545.8 114 L1549.5 107.5 L1554.4 114 L1554.6 146.5 L1550.4 149 L1546.4 146.8 Z" fill="#e4e4f4"/>
<path d="M1526.7 110.4 L1549.2 103.5 L1574.6 110.4 M1526.7 110.4 L1545.8 114 L1549.5 107.5 L1554.4 114 L1574.6 110.4 M1545.8 114 L1546.4 146.8 M1554.4 114 L1554.6 146.5 M1573.5 136.3 L1574.6 110.4" fill="none" stroke="#6c6c7c" stroke-width=".8"/>
<path d="M1526.7 110.4 L1528.5 137 L1550.4 149 L1573.5 136.3" fill="none" stroke="#9a9aae" stroke-width=".5"/>
<path d="M1533 125 l4 .6 M1535 123.6 l.3 3.4 M1561 127.6 l3 -1 M1565 125 l3 -1" stroke="#aaaabc" stroke-width=".7" fill="none"/>
</g>
<path d="M1524.4 112.7 L1524.4 140.4" stroke="#1414d8" stroke-width="2.2"/>
<path d="M1525.5 141 L1532.5 137.3" stroke="#58d070" stroke-width="2"/>
<path d="M1526 141.5 L1542.9 151.3" stroke="#c23a54" stroke-width="2"/>
<circle cx="1526.5" cy="139.5" r="1.3" fill="#fff" opacity=".8"/>

<g opacity=".8"><path d="M1566 154.5 L1573 151.3 L1579.8 154.5 L1579.8 160.5 L1573 163.8 L1566 160.5 Z" fill="#c4c4e4"/><path d="M1566 154.5 L1573 157.5 L1579.8 154.5 L1573 151.3 Z" fill="#d8d8f2"/><path d="M1573 157.5 L1579.8 154.5 L1579.8 160.5 L1573 163.8 Z" fill="#b4b4d6"/></g>
<path d="M1582.7 155.4 L1590.8 155.4 L1586.7 159.4 Z" fill="#a8a8c8" opacity=".7"/>

<g>
<path d="M1558 868.5 L1557.5 845" stroke="#1c1c9c" stroke-width="1.3"/>
<path d="M1555.2 848.5 L1557.4 840.5 L1559.8 848.5 Z" fill="#1c1c9c"/>
<path d="M1558 868.5 L1571 865" stroke="#2e9c3c" stroke-width="1.3"/>
<path d="M1568 862.2 L1576 863.6 L1569.6 867.8 Z" fill="#2e9c3c"/>
<path d="M1558 868.5 L1574 873.2" stroke="#c02828" stroke-width="1.3"/>
<path d="M1573.2 869.8 L1582 875.2 L1571.8 876.2 Z" fill="#c02828"/>
<text x="1557.4" y="838.8" font-family="Liberation Sans" font-size="5.5" fill="#222" font-weight="bold">Z</text>
<text x="1576.5" y="863.3" font-family="Liberation Sans" font-size="5.5" fill="#222" font-weight="bold">Y</text>
<text x="1583.6" y="875.4" font-family="Liberation Sans" font-size="5.5" fill="#222" font-weight="bold">X</text>
</g>
</svg>

</div>

<div id="tabbar" class="abs">
  <div class="abs" style="left:547px;top:1px;width:234px;height:13px;border:1px solid #c4c3c4;border-radius:3px;background:#e4e3e4"></div>
  <div class="abs" style="left:548px;top:2px;width:117px;height:11px;background:#fff;border-radius:2px 0 0 2px"></div>
  <div class="abs dtab" style="left:561px">ChangFangINPUT : 1*</div>
  <div class="abs dtab" style="left:680px">ChangFangPower : 1*</div>
  <svg class="abs" style="left:550.5px;top:4.5px" width="7" height="7" viewBox="0 0 7 7"><path d="M1 1 L6 6 M6 1 L1 6" stroke="#4a4a4a" stroke-width=".9"/></svg>
<svg class="abs" style="left:669.5px;top:4.5px" width="7" height="7" viewBox="0 0 7 7"><path d="M1 1 L6 6 M6 1 L1 6" stroke="#efefef" stroke-width=".9"/></svg>

</div>

<div id="status" class="abs">
  <div class="abs" style="left:2px;top:7px;line-height:12px;white-space:nowrap">Preselected: ChangFangPower.Body019.Pocket052.Face20 (127.868805 mm, 132.584976 mm, 17.112226 mm)</div>
  <div class="abs" style="left:1432px;top:7px;line-height:12px;white-space:nowrap">Blender</div>
  <div class="abs" style="left:1488px;top:7px;line-height:12px;white-space:nowrap">665.77 mm x 419.90 mm</div>
  <svg class="abs" style="left:1418.5px;top:8px" width="7" height="10" viewBox="0 0 7 10"><rect x=".8" y=".8" width="5.4" height="8.4" rx="2.4" fill="none" stroke="#2a2a2a" stroke-width="1.1"/><rect x="2.9" y="2" width="1.2" height="2.4" rx=".5" fill="#2a2a2a"/></svg>

</div>
<svg class="abs" style="left:1415px;top:878px;pointer-events:none" width="170" height="62" viewBox="1415 878 170 62">
<g fill="#46528c" opacity=".82">
<rect x="1440.8" y="884.7" width="9.8" height="51.5"/>
<rect x="1422.2" y="892.4" width="18.6" height="3.7"/>
<rect x="1422.2" y="908.4" width="18.6" height="3.7"/>
<rect x="1422.2" y="924.9" width="18.6" height="3.7"/>
</g>
<g fill="#5b90d4" opacity=".9">
<rect x="1455.7" y="884.7" width="4.7" height="51.5"/>
<rect x="1460.4" y="897" width="20.6" height="4.3"/>
<path d="M1477.9 891.5 L1485 886.8 L1491.8 886.8 L1491.8 901.7 L1477.9 901.7 Z"/>
<rect x="1471.2" y="901.2" width="9.8" height="15"/>
<rect x="1460.4" y="913" width="20.6" height="3.7"/>
<path d="M1476.9 916.7 L1488.2 916.7 L1488.2 933.7 L1479.5 933.7 L1479.5 929.5 L1476.9 929.5 Z"/>
</g>
<text x="1497.3" y="907.5" font-family="Liberation Sans" font-weight="bold" font-size="10.3" fill="#666a84" opacity=".85" textLength="73.5" lengthAdjust="spacingAndGlyphs">HIFI168.com</text>
<g fill="none" stroke="#707076" stroke-width="1.4" stroke-linecap="round" stroke-linejoin="round" opacity=".9">

<path d="M1499 918.7 L1519.5 918.7 M1508.3 912.6 Q1506 925 1497.6 932.6 M1502.6 913 L1501.6 918.5 M1516.6 914 L1518.2 915.8 M1505.8 923.4 L1518 923.4 Q1513 930 1507.6 933 M1506.8 925.4 Q1511 930.5 1519.6 933.2"/>

<path d="M1526.9 913 L1526.9 923.4 Q1526 929 1522.8 932.6 M1523.8 918.2 L1522.8 921.2 M1530 917.7 L1529 920.4 M1527.4 924.4 L1530.5 929.5 M1532.6 916.7 L1545.5 916.7 M1537.7 912.5 Q1539 918 1542 921.3 M1531.5 922.3 L1546 922.3 M1536.2 923.4 Q1536 929 1532.6 933.2 M1540.3 923.4 L1540.3 931.6 L1546 931.6 L1546 929.6"/>

<path d="M1550.1 933.7 L1550.1 913.6 L1569.7 913.6 L1569.7 932 L1567.6 933.7 M1553.2 918.2 L1559.4 929.6 M1559.4 918.2 L1553.2 929.6 M1561.5 918.2 L1567.6 929.6 M1567.6 918.2 L1561.5 929.6"/>
</g>
</svg>

</body>
</html>
